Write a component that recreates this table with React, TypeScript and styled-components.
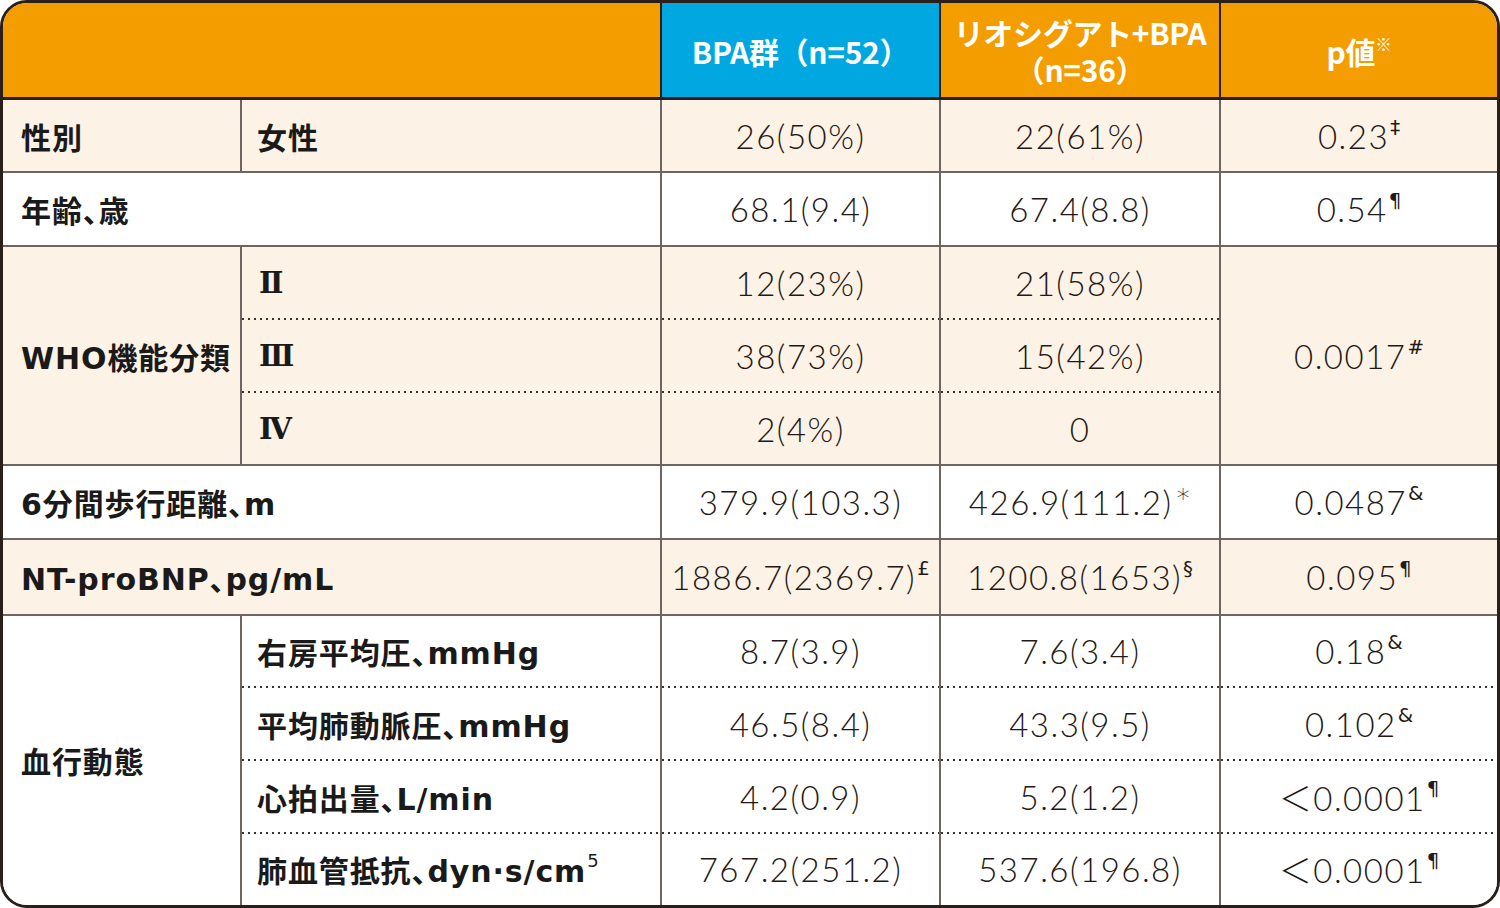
import React from 'react';
import styled, { createGlobalStyle, css } from 'styled-components';

const LINE = '#6f6560';
const DARK = '#2b1f1a';
const DOT = '#3a302c';
const BEIGE = '#fdf2e6';
const ORANGE = '#f49d00';
const BLUE = '#00a7e1';

const GlobalStyle = createGlobalStyle`
  html, body {
    margin: 0;
    padding: 0;
    background: #fff;
  }
  body {
    font-family: "Noto Sans CJK JP", sans-serif;
    color: #1a1a1a;
  }
`;

const Frame = styled.div`
  width: 1500px;
  height: 908px;
  box-sizing: border-box;
  border: 3px solid ${DARK};
  border-radius: 27px;
  overflow: hidden;
  display: grid;
  grid-template-columns: 239px 420px 279px 280px 276px;
  grid-template-rows: 97px 73px 74px 73px 73px 73px 74px 76px 72px 73px 73px 71px;
`;

type Line = 'solid' | 'dotted' | 'none';

interface CellProps {
  $cols?: number;
  $rows?: number;
  $bg?: string;
  $line?: Line;
  $end?: boolean;
}

const Cell = styled.div<CellProps>`
  grid-column: span ${p => p.$cols ?? 1};
  grid-row: span ${p => p.$rows ?? 1};
  box-sizing: border-box;
  display: flex;
  align-items: center;
  justify-content: center;
  background-color: ${p => p.$bg ?? '#fff'};
  border-right: ${p => (p.$end ? 'none' : `2px solid ${LINE}`)};
  border-bottom: ${p => ((p.$line ?? 'solid') === 'solid' ? `2px solid ${LINE}` : 'none')};
  ${p =>
    p.$line === 'dotted' &&
    css`
      padding-bottom: 2px;
      background-image: linear-gradient(to right, ${DOT} 2px, transparent 2px);
      background-size: 6px 2px;
      background-repeat: repeat-x;
      background-position: left bottom;
    `}
  ${p =>
    p.$line === 'none' &&
    css`
      padding-bottom: 2px;
    `}
`;

const HeadCell = styled.div<{ $cols?: number; $bg: string; $end?: boolean }>`
  grid-column: span ${p => p.$cols ?? 1};
  box-sizing: border-box;
  display: flex;
  align-items: center;
  justify-content: center;
  background: ${p => p.$bg};
  border-bottom: 3px solid ${DARK};
  border-right: ${p => (p.$end ? 'none' : `2px solid ${DARK}`)};
  color: #fff;
  font-family: "Noto Sans CJK JP", sans-serif;
  font-weight: 700;
  font-size: 30px;
  line-height: 37px;
  letter-spacing: -0.3px;
  text-align: center;
  padding-top: 2px;
`;

const HeadText = styled.div`
  white-space: nowrap;
`;

const Label = styled(Cell)<{ $pad?: number }>`
  justify-content: flex-start;
  padding-left: ${p => p.$pad ?? 18}px;
  font-family: "DejaVu Sans", "Noto Sans CJK JP", sans-serif;
  font-feature-settings: "palt";
  font-weight: 700;
  font-size: 30px;
  letter-spacing: 0.9px;
  white-space: nowrap;
`;

const Roman = styled(Label)`
  font-family: "DejaVu Serif", "Liberation Serif", serif;
  font-size: 29px;
  letter-spacing: 0;
  padding-left: 17px;
`;

const Val = styled(Cell)`
  font-family: "Lato", "Noto Sans CJK JP", sans-serif;
  font-feature-settings: "palt";
  font-weight: 300;
  font-size: 33px;
  letter-spacing: 1.5px;
  color: #231815;
  white-space: nowrap;
`;

const Sup = styled.span`
  font-family: "DejaVu Sans", sans-serif;
  font-size: 0.6em;
  line-height: 1;
  position: relative;
  top: -0.4em;
  margin-left: 1px;
  font-weight: 400;
  letter-spacing: 0;
`;

const Star = styled.span`
  font-family: "DejaVu Sans", sans-serif;
  font-size: 0.8em;
  position: relative;
  top: -0.12em;
  margin-left: 4px;
`;

const HeadSup = styled.span`
  font-size: 0.55em;
  line-height: 1;
  position: relative;
  top: -0.75em;
  font-weight: 400;
`;

export default function App() {
  return (
    <>
      <GlobalStyle />
      <Frame>
        <HeadCell $cols={2} $bg={ORANGE} />
        <HeadCell $bg={BLUE}>
          <HeadText>BPA群（n=52）</HeadText>
        </HeadCell>
        <HeadCell $bg={ORANGE}>
          <HeadText>
            リオシグアト+BPA
            <br />
            （n=36）
          </HeadText>
        </HeadCell>
        <HeadCell $bg={ORANGE} $end>
          <HeadText>
            p値<HeadSup>※</HeadSup>
          </HeadText>
        </HeadCell>

        <Label $bg={BEIGE}>性別</Label>
        <Label $bg={BEIGE} $pad={15}>女性</Label>
        <Val $bg={BEIGE}>26(50%)</Val>
        <Val $bg={BEIGE}>22(61%)</Val>
        <Val $bg={BEIGE} $end>
          0.23<Sup>‡</Sup>
        </Val>

        <Label $cols={2}>年齢、歳</Label>
        <Val>68.1(9.4)</Val>
        <Val>67.4(8.8)</Val>
        <Val $end>
          0.54<Sup>¶</Sup>
        </Val>

        <Label $bg={BEIGE} $rows={3}>WHO機能分類</Label>
        <Roman $bg={BEIGE} $line="dotted">Ⅱ</Roman>
        <Val $bg={BEIGE} $line="dotted">12(23%)</Val>
        <Val $bg={BEIGE} $line="dotted">21(58%)</Val>
        <Val $bg={BEIGE} $rows={3} $end>
          0.0017<Sup>#</Sup>
        </Val>
        <Roman $bg={BEIGE} $line="dotted">Ⅲ</Roman>
        <Val $bg={BEIGE} $line="dotted">38(73%)</Val>
        <Val $bg={BEIGE} $line="dotted">15(42%)</Val>
        <Roman $bg={BEIGE}>Ⅳ</Roman>
        <Val $bg={BEIGE}>2(4%)</Val>
        <Val $bg={BEIGE}>0</Val>

        <Label $cols={2}>6分間歩行距離、m</Label>
        <Val>379.9(103.3)</Val>
        <Val>
          426.9(111.2)<Star>*</Star>
        </Val>
        <Val $end>
          0.0487<Sup>&amp;</Sup>
        </Val>

        <Label $cols={2} $bg={BEIGE}>NT-proBNP、pg/mL</Label>
        <Val $bg={BEIGE}>
          1886.7(2369.7)<Sup>£</Sup>
        </Val>
        <Val $bg={BEIGE}>
          1200.8(1653)<Sup>§</Sup>
        </Val>
        <Val $bg={BEIGE} $end>
          0.095<Sup>¶</Sup>
        </Val>

        <Label $rows={4} $line="none">血行動態</Label>
        <Label $pad={15} $line="dotted">右房平均圧、mmHg</Label>
        <Val $line="dotted">8.7(3.9)</Val>
        <Val $line="dotted">7.6(3.4)</Val>
        <Val $line="dotted" $end>
          0.18<Sup>&amp;</Sup>
        </Val>
        <Label $pad={15} $line="dotted">平均肺動脈圧、mmHg</Label>
        <Val $line="dotted">46.5(8.4)</Val>
        <Val $line="dotted">43.3(9.5)</Val>
        <Val $line="dotted" $end>
          0.102<Sup>&amp;</Sup>
        </Val>
        <Label $pad={15} $line="dotted">心拍出量、L/min</Label>
        <Val $line="dotted">4.2(0.9)</Val>
        <Val $line="dotted">5.2(1.2)</Val>
        <Val $line="dotted" $end>
          ＜0.0001<Sup>¶</Sup>
        </Val>
        <Label $pad={15} $line="none">
          肺血管抵抗、dyn·s/cm<Sup>5</Sup>
        </Label>
        <Val $line="none">767.2(251.2)</Val>
        <Val $line="none">537.6(196.8)</Val>
        <Val $line="none" $end>
          ＜0.0001<Sup>¶</Sup>
        </Val>
      </Frame>
    </>
  );
}
